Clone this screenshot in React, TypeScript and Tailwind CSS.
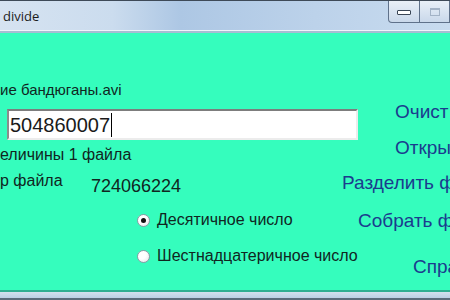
import React from "react";

// окно divide: обрезанный кусок формы с зелёным фоном

const sans = "font-['Liberation_Sans',Arial,sans-serif]";

function Radio({ checked }: { checked?: boolean }) {
  return (
    <span className="flex h-[13px] w-[13px] shrink-0 items-center justify-center rounded-full border border-[#8e9aa6] bg-[radial-gradient(circle_at_35%_35%,#ffffff_40%,#dfe3e8)]">
      {checked && <span className="h-[5px] w-[5px] rounded-full bg-[#111]" />}
    </span>
  );
}

function TitleBar() {
  return (
    <div className="flex h-[33px] shrink-0 border-t border-[#3e4a58] bg-[linear-gradient(90deg,#d6e3f1_0%,#cbdcee_25%,#adc7e4_40%,#bcd2ea_70%,#c8dbef_100%)] shadow-[inset_0_-2px_0_#a7bcd3,inset_0_-3px_0_#eef4fa]">
      <div className="flex-1 pl-[3px] pt-[6px] font-['Open_Sans',sans-serif] text-[13px] leading-[18px] text-[#1b1b1b]">
        divide
      </div>
      <div className="flex h-[22px] self-start">
        <div className="flex w-[32px] items-center justify-center rounded-bl-[4px] border border-t-0 border-[#5f718a] bg-[linear-gradient(180deg,#e9f0f8,#c9d8ea)]">
          <span className="mt-[1px] h-[5px] w-[14px] rounded-[1px] border border-[#3a4656] bg-white" />
        </div>
        <div className="flex w-[30px] items-center justify-center border-b border-r border-[#5f718a] bg-[linear-gradient(180deg,#e9f0f8,#c9d8ea)]">
          <span className="h-[8px] w-[10px] border border-[#a3b3c6] border-t-2" />
        </div>
      </div>
    </div>
  );
}

export default function App() {
  const blue = `${sans} whitespace-nowrap text-[19px] leading-[20px] text-[#1b3b8e]`;
  const dark = "text-[#10261f]";

  return (
    <div className="flex h-[300px] w-[450px] flex-col overflow-hidden bg-[#c5d5e8]">
      <TitleBar />

      <div className="flex h-[257px] shrink-0 bg-[#35fdbd]">
        {/* левая колонка */}
        <div className={`flex w-[335px] shrink-0 flex-col ${sans} ${dark}`}>
          <div className="mt-[48px] whitespace-nowrap text-[15px] leading-[18px]">ие бандюганы.avi</div>

          <div className="ml-[7px] mt-[10px] flex h-[31px] w-[351px] shrink-0 items-center border-[2px] border-b-[#ececec] border-l-[#8c8c8c] border-r-[#ececec] border-t-[#7d7d7d] bg-white pl-[1px]">
            <span className="text-[20px] leading-[24px] text-[#1a1a1a]">504860007</span>
            <span className="ml-[1px] h-[24px] w-[1px] bg-black" />
          </div>

          <div className="mt-[6px] whitespace-nowrap text-[16px] leading-[18px]">еличины 1 файла</div>

          <div className="mt-[8px] flex h-[22px] items-start">
            <span className="w-[91px] whitespace-nowrap text-[16px] leading-[18px]">р файла</span>
            <span className="mt-[3px] text-[18px] leading-[22px]">724066224</span>
          </div>

          <div className="ml-[137px] mt-[16px] flex h-[20px] items-center gap-[7px]">
            <Radio checked />
            <span className="whitespace-nowrap text-[16px] leading-[20px]">Десятичное число</span>
          </div>

          <div className="ml-[137px] mt-[16px] flex h-[20px] items-center gap-[7px]">
            <Radio />
            <span className="whitespace-nowrap text-[16px] leading-[20px]">Шестнадцатеричное число</span>
          </div>
        </div>

        {/* правая колонка: кнопки-надписи, видна только их часть */}
        <div className="flex min-w-0 flex-1 flex-col">
          <div className={`${blue} ml-[60px] mt-[69px]`}>Очист</div>
          <div className={`${blue} ml-[60px] mt-[16px]`}>Откры</div>
          <div className={`${blue} ml-[7px] mt-[15px]`}>Разделить ф</div>
          <div className={`${blue} ml-[23px] mt-[18px]`}>Собрать ф</div>
          <div className={`${blue} ml-[78px] mt-[26px]`}>Спра</div>
        </div>
      </div>

      <div className="h-[2px] shrink-0 bg-[#2fae92]" />
      <div className="flex-1 border-b-[2px] border-[#5b6b7c] bg-[linear-gradient(180deg,#d3e0ef,#bccfe5)]" />
    </div>
  );
}
